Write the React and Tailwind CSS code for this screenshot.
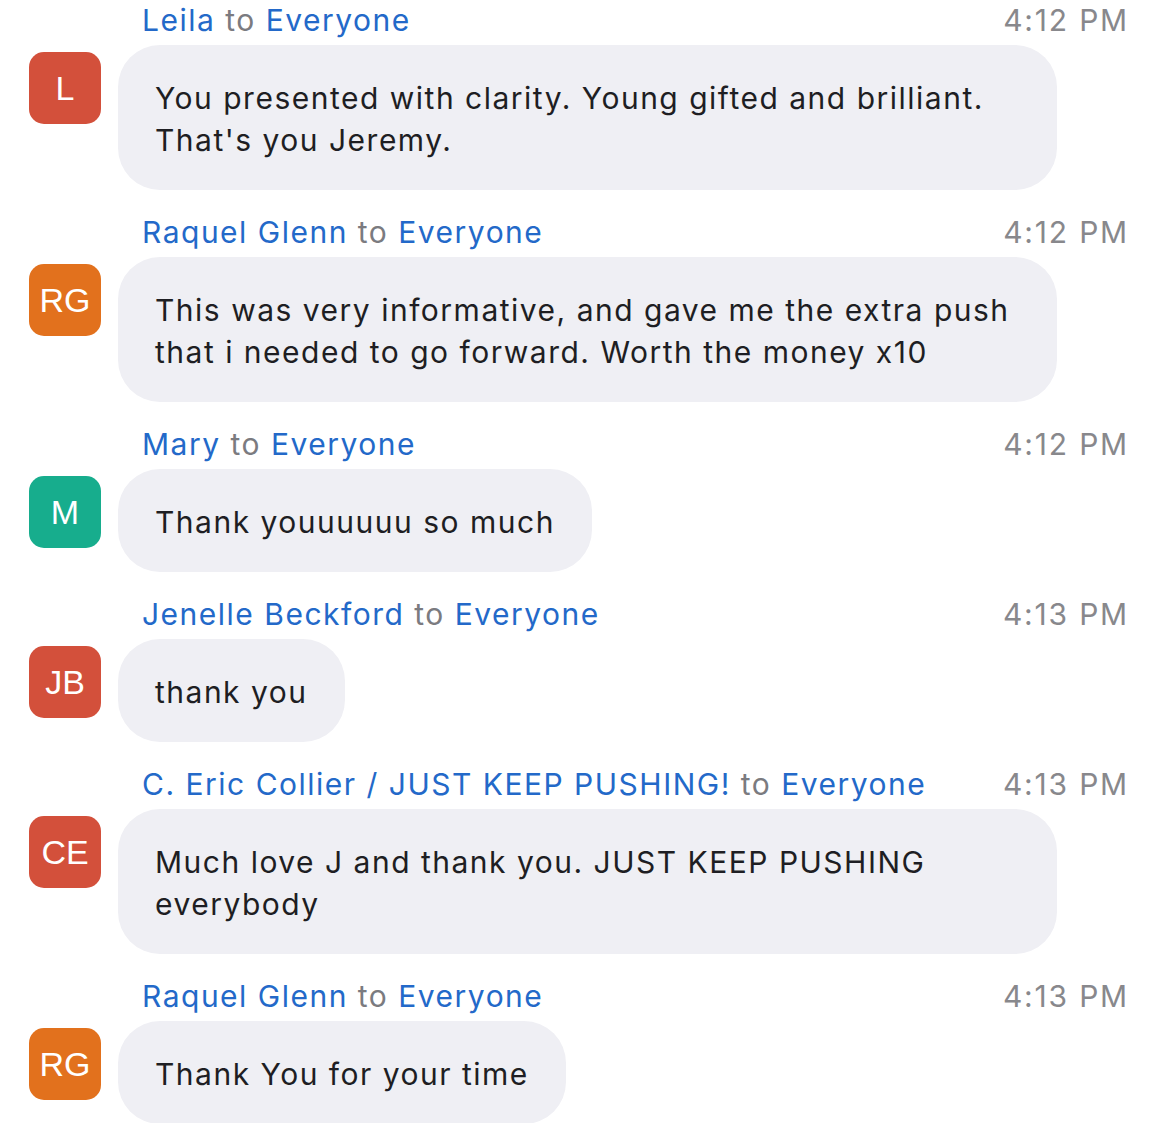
const messages = [
  {
    initials: "L",
    color: "bg-[#d3503b]",
    name: "Leila",
    time: "4:12 PM",
    lines: ["You presented with clarity. Young gifted and brilliant.", "That's you Jeremy."],
  },
  {
    initials: "RG",
    color: "bg-[#e2711d]",
    name: "Raquel Glenn",
    time: "4:12 PM",
    lines: ["This was very informative, and gave me the extra push", "that i needed to go forward. Worth the money x10"],
  },
  {
    initials: "M",
    color: "bg-[#17ad8d]",
    name: "Mary",
    time: "4:12 PM",
    lines: ["Thank youuuuuu so much"],
  },
  {
    initials: "JB",
    color: "bg-[#d3503b]",
    name: "Jenelle Beckford",
    time: "4:13 PM",
    lines: ["thank you"],
  },
  {
    initials: "CE",
    color: "bg-[#d3503b]",
    name: "C. Eric Collier / JUST KEEP PUSHING!",
    time: "4:13 PM",
    lines: ["Much love J and thank you. JUST KEEP PUSHING", "everybody"],
  },
  {
    initials: "RG",
    color: "bg-[#e2711d]",
    name: "Raquel Glenn",
    time: "4:13 PM",
    lines: ["Thank You for your time"],
  },
];

const Message = ({ msg, first }) => {
  const wide = msg.lines.length > 1;
  return (
    <div className={first ? "" : "mt-[21px]"}>
      <div className="flex items-center justify-between pl-[113px] h-[42px] text-[30px] leading-[42px] tracking-[0.05em]">
        <div className="whitespace-nowrap">
          <span className="text-[#2369c9]">{msg.name}</span>
          <span className="text-[#7b7b80]"> to </span>
          <span className="text-[#2369c9]">Everyone</span>
        </div>
        <span className="text-[#88888c] whitespace-nowrap tracking-[0.06em] -mr-[2px]">{msg.time}</span>
      </div>
      <div className="flex items-start gap-[17px] mt-[4px]">
        <div
          className={`${msg.color} w-[72px] h-[72px] rounded-[15px] mt-[7px] shrink-0 flex items-center justify-center text-white text-[34px] tracking-normal`}
          style={{ fontFamily: "'Liberation Sans', Arial, sans-serif" }}
        >
          {msg.initials}
        </div>
        <div
          className={`bg-[#efeff4] rounded-[42px] pl-[37px] pr-[37px] pt-[32px] pb-[29px] text-[30px] leading-[42px] tracking-[0.05em] text-[#1e1e23] whitespace-nowrap ${
            wide ? "w-[939px]" : ""
          }`}
        >
          {msg.lines.map((l, i) => (
            <div key={i}>{l}</div>
          ))}
        </div>
      </div>
    </div>
  );
};

export default function App() {
  return (
    <div
      className="w-[1170px] h-[1123px] overflow-hidden bg-white pl-[29px] pr-[43px]"
      style={{ fontFamily: "Inter, 'Liberation Sans', sans-serif" }}
    >
      <div className="-mt-[1px]">
        {messages.map((m, i) => (
          <Message key={i} msg={m} first={i === 0} />
        ))}
      </div>
    </div>
  );
}
